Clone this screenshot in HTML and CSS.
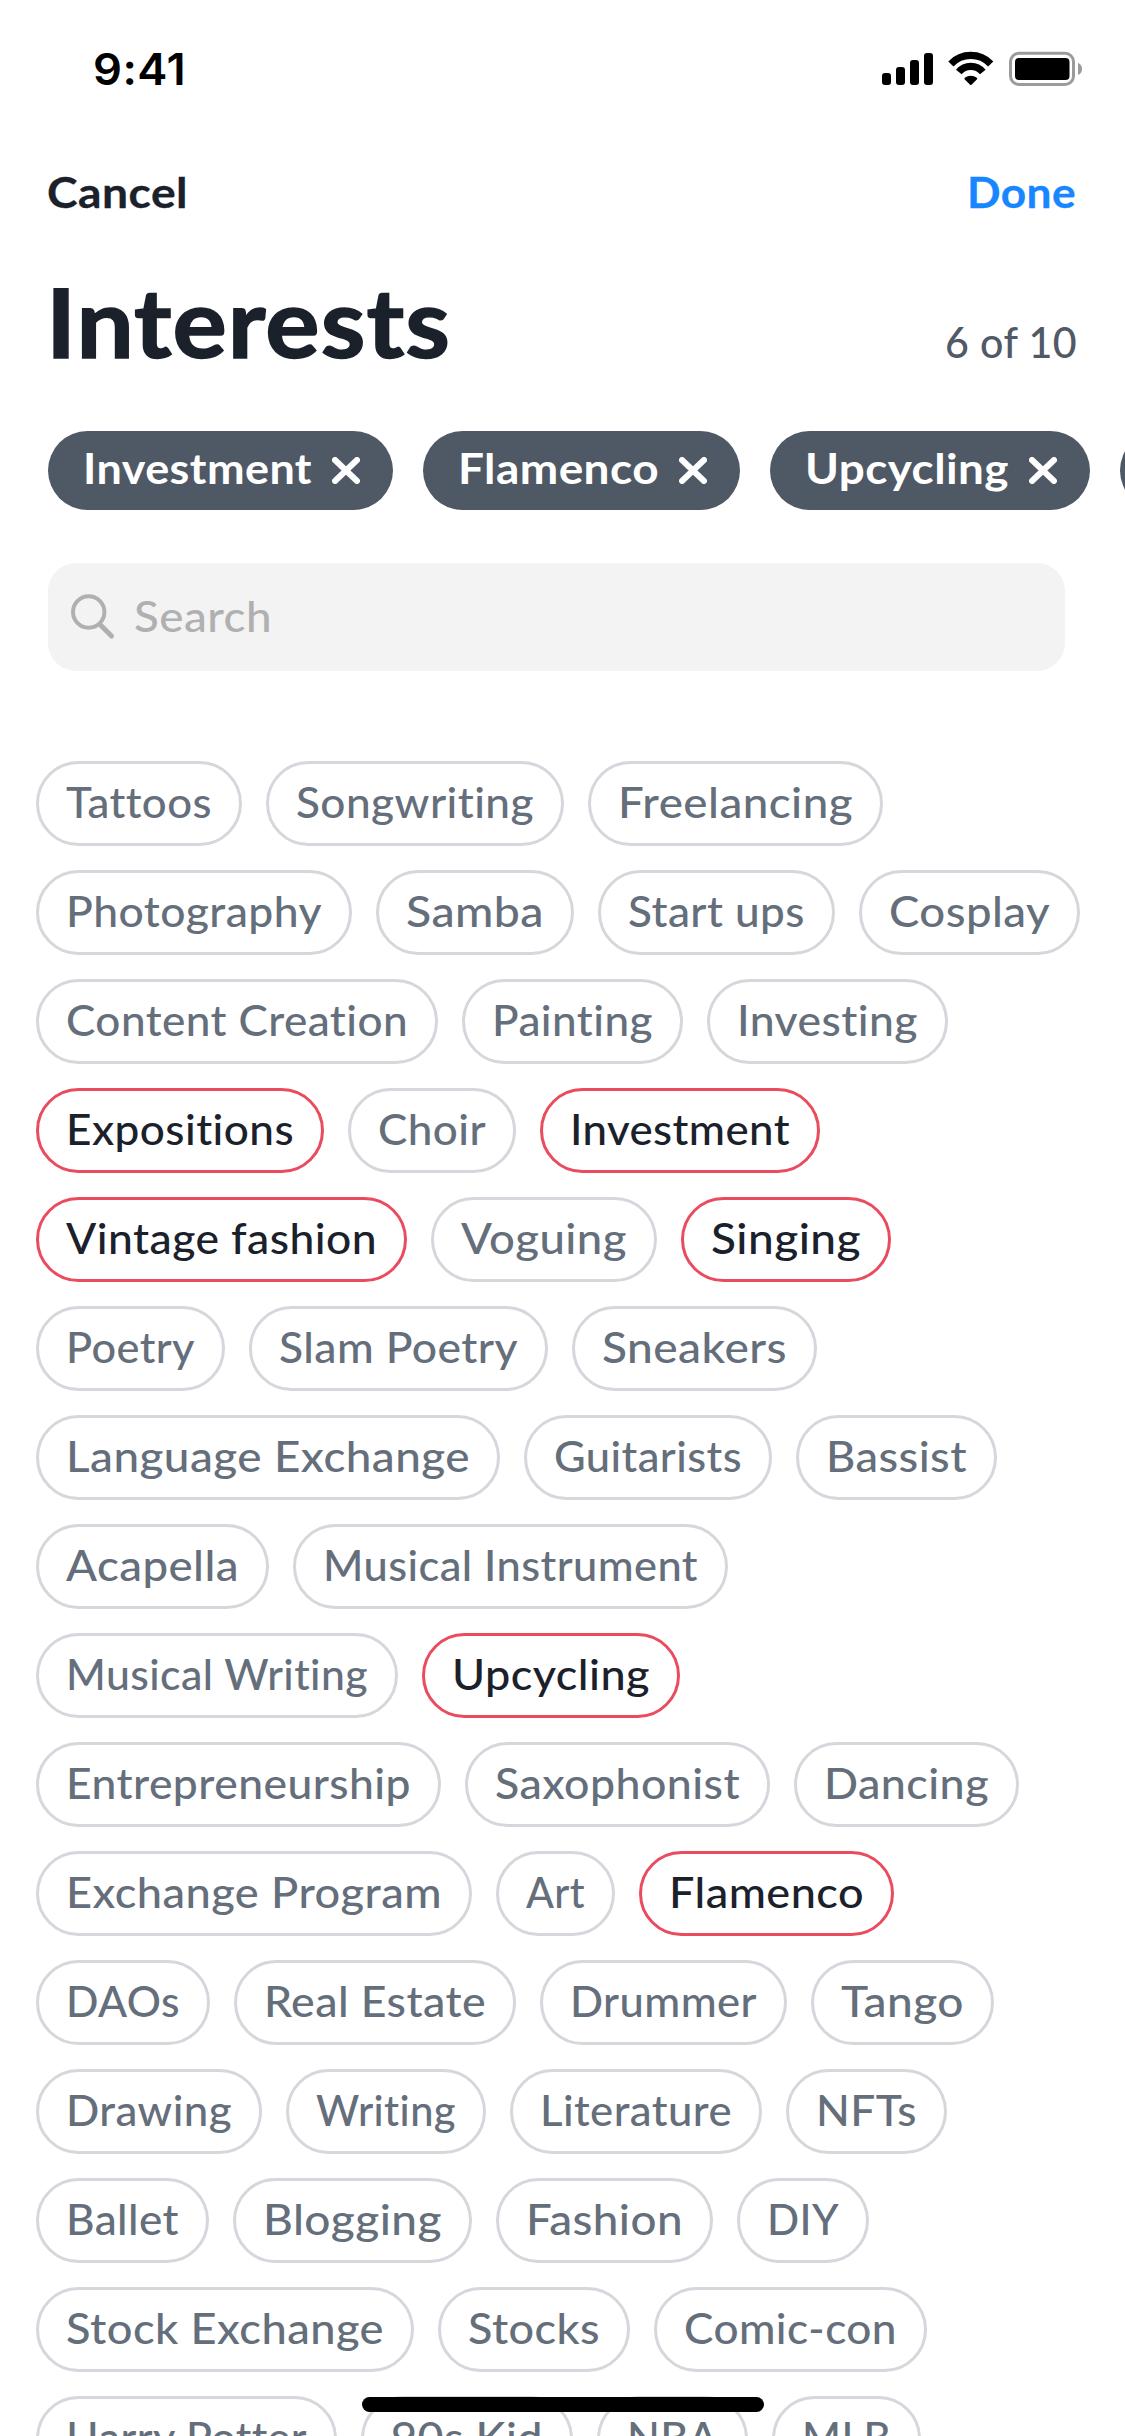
FILE: index.html
```html
<!DOCTYPE html>
<html lang="en">
<head>
<meta charset="utf-8">
<title>Interests</title>
<link rel="stylesheet" href="styles.css">
</head>
<body>
<div class="screen">
  <header class="status">
    <span class="time"><span class="fit">9:41</span></span>
    <svg class="status-icons" width="202" height="38" viewBox="0 0 202 38">
      <rect x="0" y="23" width="9" height="12" rx="3"/>
      <rect x="14" y="17" width="9" height="18" rx="3"/>
      <rect x="28" y="10" width="9" height="25" rx="3"/>
      <rect x="42" y="3" width="9" height="32" rx="3"/>
      <g fill="none" stroke="#000" stroke-width="7.200">
        <path d="M68.900 13.900a27.500 27.500 0 0 1 39.800 0"/>
        <path d="M76.800 22a15.500 15.500 0 0 1 24 0"/>
      </g>
      <path d="M82.800 27.800a9.500 9.500 0 0 1 12 0q.9.800 0 1.700L89.500 34.800q-.7.600-1.400 0L82.800 29.500q-.9-.9 0-1.700z"/>
      <rect x="128.500" y="3.200" width="63" height="31.300" rx="8.500" fill="none" stroke="#9b9b9b" stroke-width="3"/>
      <rect x="133" y="8" width="54.500" height="22" rx="4"/>
      <path d="M196 12.700q4 2 4 6.200t-4 6.200z" fill="#9b9b9b"/>
    </svg>
  </header>
  <nav class="nav">
    <span class="cancel"><span class="fit">Cancel</span></span>
    <span class="done"><span class="fit">Done</span></span>
  </nav>
  <div class="heading">
    <h1 class="title"><span class="fit">Interests</span></h1>
    <span class="count"><span class="fit">6 of 10</span></span>
  </div>
  <div class="picked">
    <div class="pill" style="width:345px"><span class="pill-text"><span class="fit">Investment</span></span><svg class="x" viewBox="0 0 28 27"><path d="M3 3l22 21M25 3L3 24"/></svg></div>
    <div class="pill" style="width:317px"><span class="pill-text"><span class="fit">Flamenco</span></span><svg class="x" viewBox="0 0 28 27"><path d="M3 3l22 21M25 3L3 24"/></svg></div>
    <div class="pill" style="width:320px"><span class="pill-text"><span class="fit">Upcycling</span></span><svg class="x" viewBox="0 0 28 27"><path d="M3 3l22 21M25 3L3 24"/></svg></div>
    <div class="pill" style="width:300px"></div>
  </div>
  <div class="search">
    <svg class="glass" width="46" height="46" viewBox="0 0 46 46"><circle cx="18.700" cy="18" r="15.700"/><path d="M30 30.500L41.500 42" stroke-width="5"/></svg>
    <span class="placeholder"><span class="fit">Search</span></span>
  </div>
  <main class="chips">
    <div class="chip" style="width:206px"><span class="fit">Tattoos</span></div>
    <div class="chip" style="width:298px"><span class="fit">Songwriting</span></div>
    <div class="chip" style="width:295px"><span class="fit">Freelancing</span></div>
    <div class="chip" style="width:316px"><span class="fit">Photography</span></div>
    <div class="chip" style="width:198px"><span class="fit">Samba</span></div>
    <div class="chip" style="width:237px"><span class="fit">Start ups</span></div>
    <div class="chip" style="width:221px"><span class="fit">Cosplay</span></div>
    <div class="chip" style="width:402px"><span class="fit">Content Creation</span></div>
    <div class="chip" style="width:221px"><span class="fit">Painting</span></div>
    <div class="chip" style="width:241px"><span class="fit">Investing</span></div>
    <div class="chip on" style="width:288px"><span class="fit">Expositions</span></div>
    <div class="chip" style="width:168px"><span class="fit">Choir</span></div>
    <div class="chip on" style="width:280px"><span class="fit">Investment</span></div>
    <div class="chip on" style="width:371px"><span class="fit">Vintage fashion</span></div>
    <div class="chip" style="width:226px"><span class="fit">Voguing</span></div>
    <div class="chip on" style="width:210px"><span class="fit">Singing</span></div>
    <div class="chip" style="width:189px"><span class="fit">Poetry</span></div>
    <div class="chip" style="width:299px"><span class="fit">Slam Poetry</span></div>
    <div class="chip" style="width:245px"><span class="fit">Sneakers</span></div>
    <div class="chip" style="width:464px"><span class="fit">Language Exchange</span></div>
    <div class="chip" style="width:248px"><span class="fit">Guitarists</span></div>
    <div class="chip" style="width:201px"><span class="fit">Bassist</span></div>
    <div class="chip" style="width:233px"><span class="fit">Acapella</span></div>
    <div class="chip" style="width:435px"><span class="fit">Musical Instrument</span></div>
    <div class="chip" style="width:362px"><span class="fit">Musical Writing</span></div>
    <div class="chip on" style="width:258px"><span class="fit">Upcycling</span></div>
    <div class="chip" style="width:405px"><span class="fit">Entrepreneurship</span></div>
    <div class="chip" style="width:305px"><span class="fit">Saxophonist</span></div>
    <div class="chip" style="width:225px"><span class="fit">Dancing</span></div>
    <div class="chip" style="width:436px"><span class="fit">Exchange Program</span></div>
    <div class="chip" style="width:119px"><span class="fit">Art</span></div>
    <div class="chip on" style="width:255px"><span class="fit">Flamenco</span></div>
    <div class="chip" style="width:174px"><span class="fit">DAOs</span></div>
    <div class="chip" style="width:282px"><span class="fit">Real Estate</span></div>
    <div class="chip" style="width:247px"><span class="fit">Drummer</span></div>
    <div class="chip" style="width:183px"><span class="fit">Tango</span></div>
    <div class="chip" style="width:226px"><span class="fit">Drawing</span></div>
    <div class="chip" style="width:200px"><span class="fit">Writing</span></div>
    <div class="chip" style="width:252px"><span class="fit">Literature</span></div>
    <div class="chip" style="width:161px"><span class="fit">NFTs</span></div>
    <div class="chip" style="width:173px"><span class="fit">Ballet</span></div>
    <div class="chip" style="width:239px"><span class="fit">Blogging</span></div>
    <div class="chip" style="width:217px"><span class="fit">Fashion</span></div>
    <div class="chip" style="width:132px"><span class="fit">DIY</span></div>
    <div class="chip" style="width:378px"><span class="fit">Stock Exchange</span></div>
    <div class="chip" style="width:192px"><span class="fit">Stocks</span></div>
    <div class="chip" style="width:273px"><span class="fit">Comic-con</span></div>
    <div class="chip" style="width:301px"><span class="fit">Harry Potter</span></div>
    <div class="chip" style="width:212px"><span class="fit">90s Kid</span></div>
    <div class="chip" style="width:151px"><span class="fit">NBA</span></div>
    <div class="chip" style="width:149px"><span class="fit">MLB</span></div>
  </main>
  <div class="home-bar"></div>
</div>
<script src="fit.js"></script>
</body>
</html>
```
FILE: fit.js
```js
// Widen each label so that it fills the content box of its container.
document.querySelectorAll('.fit').forEach(function (el) {
  var box = getComputedStyle(el.parentElement);
  var room = el.parentElement.clientWidth - parseFloat(box.paddingLeft) - parseFloat(box.paddingRight);
  var natural = el.getBoundingClientRect().width;
  el.style.transform = 'scaleX(' + room / natural + ')';
});
```
FILE: styles.css
```css
* { box-sizing: border-box; }

body {
  margin: 0;
  background: #fff;
  font-family: Lato, "Open Sans", sans-serif;
  color: #1b212b;
}

.screen {
  position: relative;
  width: 1125px;
  height: 2436px;
  overflow: hidden;
  background: #fff;
}

.fit {
  display: inline-block;
  white-space: nowrap;
  letter-spacing: 0.01em;
  transform-origin: left center;
}

.status {
  display: flex;
  justify-content: space-between;
  height: 145px;
  padding: 50px 41px 0 93px;
}
.time {
  width: 93px;
  color: #000;
  font: 600 44px/38px Inter, sans-serif;
}

.nav {
  display: flex;
  justify-content: space-between;
  height: 105px;
  padding: 18px 49px 0 47px;
  font-size: 42.5px;
  font-weight: 700;
  line-height: 58px;
}
.cancel, .done { -webkit-text-stroke: 0.3px currentColor; }
.cancel { width: 141px; }
.done { width: 109px; color: #1786ff; }

.heading {
  display: flex;
  justify-content: space-between;
  align-items: baseline;
  height: 181px;
  padding: 10px 48px 0 46px;
}
.title {
  width: 405px;
  margin: 0;
  font-size: 95px;
  font-weight: 700;
  line-height: 123px;
  -webkit-text-stroke: 1.5px #1b212b;
}
.count {
  width: 132px;
  color: #505965;
  font-size: 42px;
  font-weight: 500;
}

.picked {
  display: flex;
  gap: 30px;
  height: 132px;
  padding-left: 48px;
}
.pill {
  flex: none;
  display: flex;
  align-items: center;
  gap: 20px;
  height: 79px;
  padding: 0 33px 0 35px;
  border-radius: 40px;
  background: #4f5965;
  color: #fff;
  font-size: 42px;
  font-weight: 700;
  line-height: 75px;
}
.pill-text { flex: 1; min-width: 0; padding-bottom: 4px; }
.x {
  flex: none;
  width: 28px;
  height: 27px;
  fill: none;
  stroke: #fff;
  stroke-width: 6;
  stroke-linecap: round;
}

.search {
  display: flex;
  align-items: center;
  gap: 18px;
  width: 1017px;
  height: 108px;
  margin-left: 48px;
  padding-left: 22px;
  border-radius: 28px;
  background: #f3f3f3;
  color: #b0b0b2;
  font-size: 42.5px;
  font-weight: 500;
}
.glass {
  fill: none;
  stroke: #b0b0b2;
  stroke-width: 4;
  stroke-linecap: round;
}
.placeholder { width: 138px; padding-bottom: 4px; }

.chips {
  display: flex;
  flex-wrap: wrap;
  gap: 24px;
  padding: 90px 36px 0;
}
.chip {
  flex: none;
  height: 85px;
  padding: 0 27px;
  border: 3px solid #d4d7dc;
  border-radius: 43px;
  color: #656e7b;
  font-size: 42.5px;
  font-weight: 500;
  line-height: 75px;
}
.on {
  border-color: #ea4b5e;
  color: #1b212b;
}

.home-bar {
  position: absolute;
  left: 362px;
  top: 2397px;
  width: 402px;
  height: 15px;
  border-radius: 8px;
  background: #000;
}
```
